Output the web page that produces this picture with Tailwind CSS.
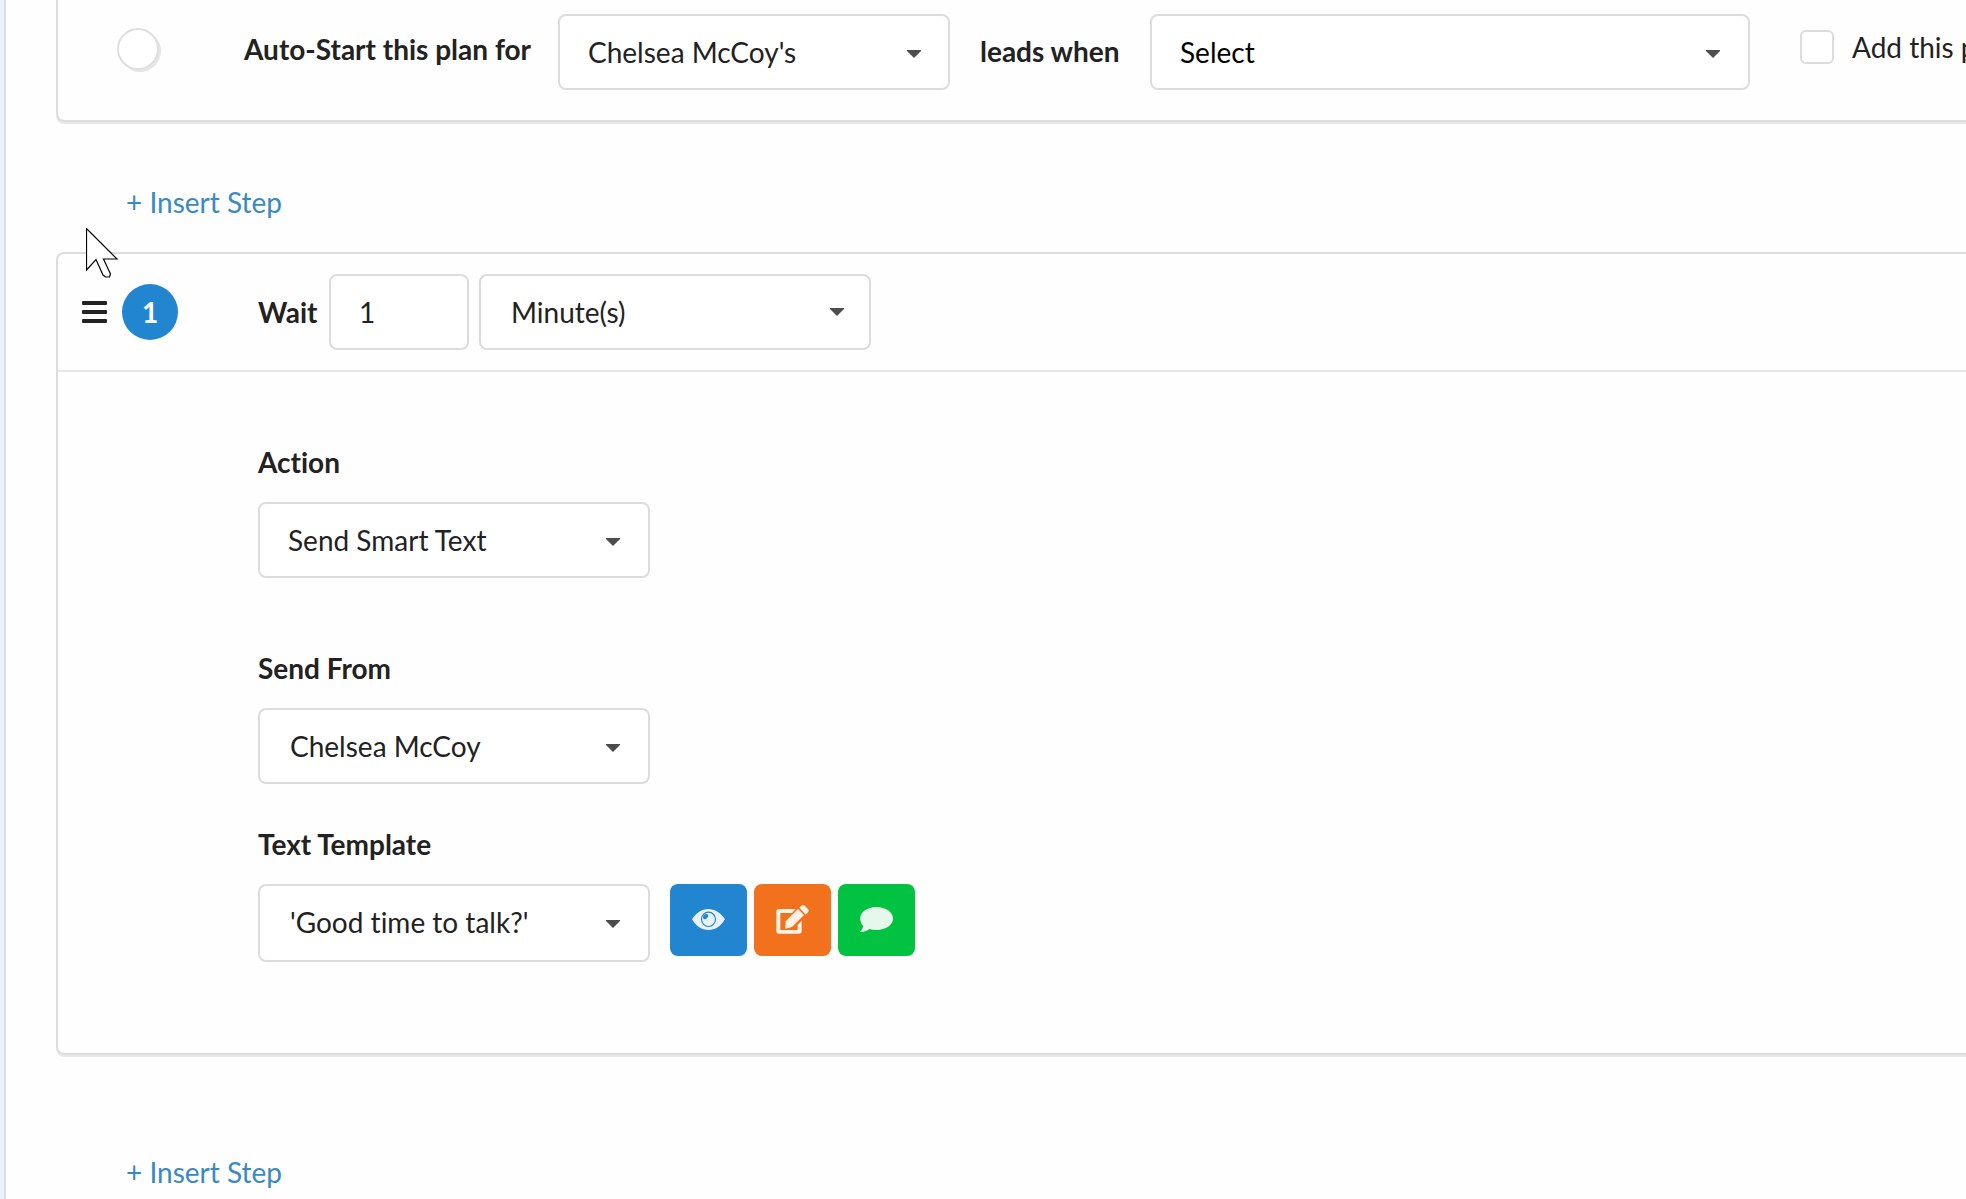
<!DOCTYPE html>
<html lang="en">
<head>
<meta charset="utf-8">
<meta name="viewport" content="width=device-width, initial-scale=1">
<title>Action Plan</title>
<script src="https://cdn.jsdelivr.net/npm/@tailwindcss/browser@4"></script>
</head>
<body class="bg-[#eaf1f9] text-[28px] leading-10 text-[#222222] font-['Lato',sans-serif] [font-variant-ligatures:none] overflow-x-hidden">
<main class="relative ml-1 min-h-screen overflow-hidden border-l-2 border-[#dcdddd] bg-[#fefefe] pl-[50px]">

  <section class="-mr-5 rounded-b-lg border-2 border-t-0 border-[#dcdcdc] shadow-[0_2px_0_#e8e8e8]">
    <div class="flex items-center pt-[14px] pb-[30px] pl-[59px] whitespace-nowrap">
      <div class="flex w-[127px] shrink-0 pb-[6px]">
        <input type="checkbox" aria-label="Auto-start" class="size-[42px] appearance-none rounded-full border-2 border-[#dedede] bg-white shadow-[2px_2px_0_#e6e6e6]">
      </div>
      <label for="owner" class="w-[314px] shrink-0 pb-[6px] font-bold">Auto-Start this plan for</label>
      <div class="relative w-[392px] shrink-0">
        <select id="owner" class="block h-[76px] w-full appearance-none rounded-lg border-2 border-[#dcdcdc] bg-white px-7 [font-variant-ligatures:none]"><option>Chelsea McCoy's</option></select>
        <svg class="pointer-events-none absolute top-9 right-[29px] h-2 w-[14px]" viewBox="0 0 14 8" fill="#4d4d4d"><path d="M0 0h14v1L7 8 0 1z"/></svg>
      </div>
      <label for="trigger" class="w-[200px] shrink-0 pb-[2px] pl-[30px] font-bold">leads when</label>
      <div class="relative w-[600px] shrink-0">
        <select id="trigger" class="block h-[76px] w-full appearance-none rounded-lg border-2 border-[#dcdcdc] bg-white px-7 text-black [font-variant-ligatures:none]"><option>Select</option></select>
        <svg class="pointer-events-none absolute top-9 right-[30px] h-2 w-[14px]" viewBox="0 0 14 8" fill="#4d4d4d"><path d="M0 0h14v1L7 8 0 1z"/></svg>
      </div>
      <label class="ml-[50px] flex shrink-0 items-center gap-[18px] pb-[10px]">
        <input type="checkbox" class="size-[34px] appearance-none rounded-md border-2 border-[#dcdcdc] bg-white">
        <span>Add this plan</span>
      </label>
    </div>
  </section>

  <div class="mt-[60px] pl-[70px]"><a href="#" class="text-[#3a89c2]">+ Insert Step</a></div>

  <section class="-mr-5 mt-[30px] rounded-lg border-2 border-[#dcdcdc] shadow-[0_2px_0_#e8e8e8]">
    <div class="flex h-[118px] items-center border-b-2 border-[#e7e7e7] pl-6">
      <button type="button" aria-label="Drag step" class="mr-[15px]">
        <svg class="block h-[22px] w-[25px]" viewBox="0 0 25 22" fill="#222"><rect y="0" width="25" height="4" rx="1"/><rect y="9" width="25" height="4" rx="1"/><rect y="18" width="25" height="4" rx="1"/></svg>
      </button>
      <span class="mr-20 flex size-14 items-center justify-center rounded-full bg-[#2185d0] font-bold text-white">1</span>
      <label for="wait" class="w-[71px] font-bold">Wait</label>
      <input id="wait" type="text" value="1" class="mr-[10px] h-[76px] w-[140px] rounded-lg border-2 border-[#dcdcdc] bg-white px-7">
      <div class="relative w-[392px]">
        <select aria-label="Wait unit" class="block h-[76px] w-full appearance-none rounded-lg border-2 border-[#dcdcdc] bg-white px-[30px] [font-variant-ligatures:none]"><option>Minute(s)</option></select>
        <svg class="pointer-events-none absolute top-[34px] right-[27px] h-2 w-[14px]" viewBox="0 0 14 8" fill="#4d4d4d"><path d="M0 0h14v1L7 8 0 1z"/></svg>
      </div>
    </div>

    <div class="pt-[70px] pb-[91px] pl-[200px]">
      <label for="action" class="block font-bold">Action</label>
      <div class="relative mt-5 w-[392px]">
        <select id="action" class="block h-[76px] w-full appearance-none rounded-lg border-2 border-[#dcdcdc] bg-white px-7 [font-variant-ligatures:none]"><option>Send Smart Text</option></select>
        <svg class="pointer-events-none absolute top-9 right-[30px] h-2 w-[14px]" viewBox="0 0 14 8" fill="#4d4d4d"><path d="M0 0h14v1L7 8 0 1z"/></svg>
      </div>

      <label for="from" class="mt-[70px] block font-bold">Send From</label>
      <div class="relative mt-5 w-[392px]">
        <select id="from" class="block h-[76px] w-full appearance-none rounded-lg border-2 border-[#dcdcdc] bg-white px-[30px] [font-variant-ligatures:none]"><option>Chelsea McCoy</option></select>
        <svg class="pointer-events-none absolute top-9 right-[30px] h-2 w-[14px]" viewBox="0 0 14 8" fill="#4d4d4d"><path d="M0 0h14v1L7 8 0 1z"/></svg>
      </div>

      <label for="template" class="mt-10 block font-bold">Text Template</label>
      <div class="mt-5 flex items-start">
        <div class="relative mr-5 w-[392px]">
          <select id="template" class="block h-[78px] w-full appearance-none rounded-lg border-2 border-[#dcdcdc] bg-white px-[30px] pb-[2px] [font-variant-ligatures:none]"><option>'Good time to talk?'</option></select>
          <svg class="pointer-events-none absolute top-9 right-[30px] h-2 w-[14px]" viewBox="0 0 14 8" fill="#4d4d4d"><path d="M0 0h14v1L7 8 0 1z"/></svg>
        </div>
        <div class="flex gap-[7px]">
          <button type="button" aria-label="Preview template" class="h-[72px] w-[77px] rounded-lg bg-[#2185d0]">
            <svg class="block size-full" viewBox="0 0 231 216">
              <path d="M66 106C78 86 96 75 115 75s38 11 50 31c-12 21-30 32-50 32s-37-11-49-32z" fill="#e9f1fa"/>
              <ellipse cx="115.500" cy="106" rx="21" ry="21.500" fill="none" stroke="#2185d0" stroke-width="3.500"/>
              <path d="M115 93a14 14 0 0 1-13 13 8 8 0 0 1-2-10 16 16 0 0 1 7-6 8 8 0 0 1 8 3z" fill="#2185d0"/>
            </svg>
          </button>
          <button type="button" aria-label="Edit template" class="h-[72px] w-[77px] rounded-lg bg-[#f2711c]">
            <svg class="block size-full" viewBox="0 0 231 216" fill="#fff1e4">
              <path d="M125 75H75a8 8 0 0 0-8 8v58a8 8 0 0 0 8 8h60a8 8 0 0 0 8-8v-31l-12 12v16H79V87h35z"/>
              <path d="M132 75l18 18-36 36-20 5 1-22z"/>
              <path d="M136 71l6-6q5-4 10 0l10 10q5 5 0 10l-7 7z"/>
            </svg>
          </button>
          <button type="button" aria-label="Text message" class="h-[72px] w-[77px] rounded-lg bg-[#02c242]">
            <svg class="block size-full" viewBox="0 0 231 216" fill="#e5f8eb">
              <path d="M115.500 69c27.500 0 49.500 15 49.500 34.500S143 138 115.500 138c-8 0-15-1-21-3-7 5-15 9-26 9-2 0-2-2-1-3 4-4 7-8 8-15-6-6-9-14-9-22.500C66.500 84 88 69 115.500 69z"/>
            </svg>
          </button>
        </div>
      </div>
    </div>
  </section>

  <div class="mt-[97px] pl-[70px]"><a href="#" class="text-[#3a89c2]">+ Insert Step</a></div>

  <!-- Mouse pointer -->
  <svg class="pointer-events-none absolute top-[228px] left-20 h-[51px] w-[33px]" viewBox="0 0 33 51"><path d="M.5.5v41.500l9.500-10.500 7 15.500 2.500 2h4l1-3-7-15h13.500z" fill="#fff" stroke="#000" stroke-width="1.200"/></svg>
</main>
</body>
</html>
